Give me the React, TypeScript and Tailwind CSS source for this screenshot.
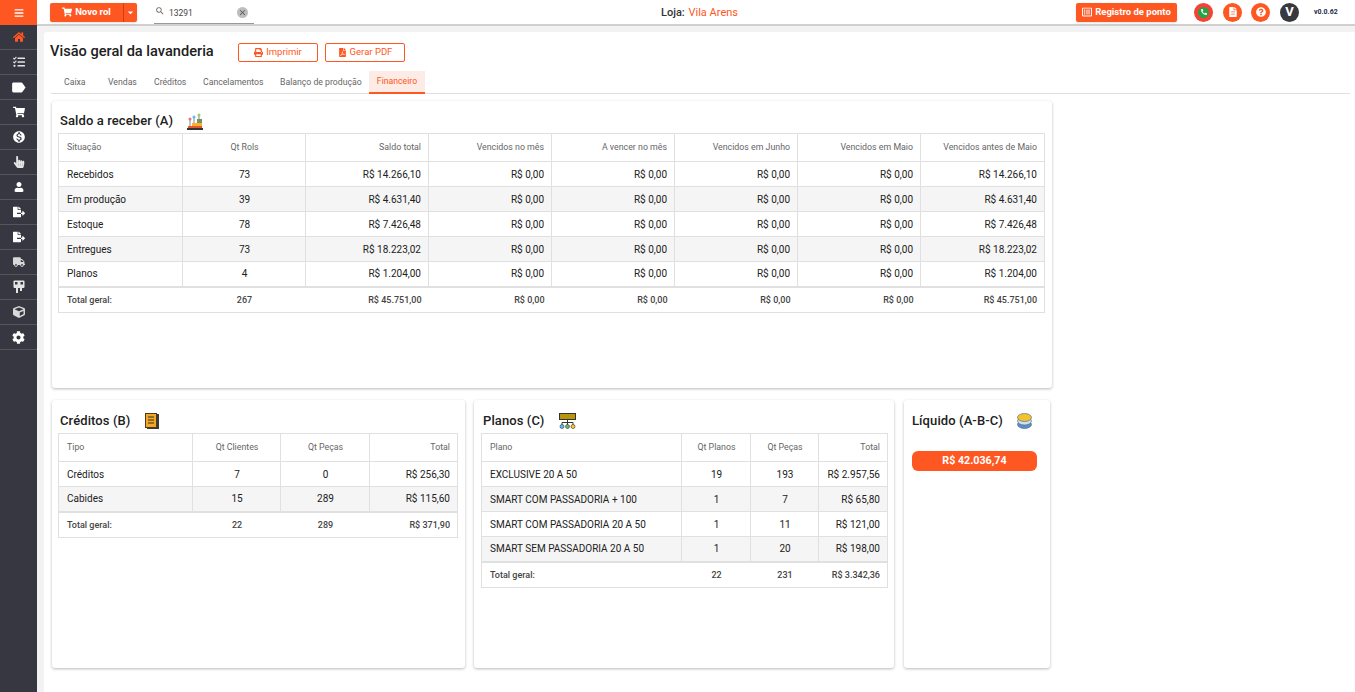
import type { ReactNode } from "react";
import { FaBars, FaHome, FaTasks, FaShoppingCart, FaHandPointer, FaUser, FaFileExport, FaTruck, FaCube, FaCog, FaPrint, FaFilePdf, FaFileAlt, FaQuestionCircle, FaPhoneAlt, FaRegListAlt } from "react-icons/fa";
import { MdLabel, MdMonetizationOn, MdArrowDropDown, MdSearch, MdClose } from "react-icons/md";

const font = { fontFamily: "Roboto, sans-serif" };

const HangerIcon = (
  <svg width="12" height="14" viewBox="0 0 12 14" fill="#e4e4e4">
    <rect x="0.5" y="0.5" width="11" height="7.500" rx="1" />
    <rect x="2" y="2" width="2.500" height="2.500" fill="#373741" />
    <rect x="7.500" y="2" width="2.500" height="2.500" fill="#373741" />
    <rect x="3" y="8" width="2" height="5" />
    <rect x="7" y="8" width="2" height="3" />
  </svg>
);

const navItems: ReactNode[] = [
  <FaHome size={12} color="#ff5722" />,
  <FaTasks size={12} color="#e4e4e4" />,
  <MdLabel size={17} color="#fff" />,
  <FaShoppingCart size={12} color="#fff" />,
  <MdMonetizationOn size={14} color="#fff" />,
  <FaHandPointer size={12} color="#e4e4e4" />,
  <FaUser size={10} color="#fff" />,
  <FaFileExport size={12} color="#fff" />,
  <FaFileExport size={12} color="#fff" />,
  <FaTruck size={12} color="#d8d8d8" />,
  HangerIcon,
  <FaCube size={12} color="#d8d8d8" />,
  <FaCog size={13} color="#fff" />,
];

function Sidebar() {
  return (
    <aside className="w-[37px] shrink-0 bg-[#373741] min-h-[692px]">
      <div className="h-[25px] bg-[#ff5722] flex items-center justify-center">
        <FaBars size={10} color="#fff" />
      </div>
      {navItems.map((icon, i) => (
        <div key={i} className="h-[25px] flex items-center justify-center border-b border-[#55555e]">
          {icon}
        </div>
      ))}
    </aside>
  );
}

function TopBar() {
  return (
    <header className="h-[26px] bg-white border-b-2 border-[#d0d0d0] flex items-center relative shrink-0">
      <div className="ml-[13px] flex h-[19px] rounded-[2px] overflow-hidden shadow-sm bg-[#ff5722] text-white text-[9.5px] font-bold">
        <div className="w-[74px] flex items-center justify-center gap-[3px] border-r border-[#c9431a]">
          <FaShoppingCart size={10} />
          Novo rol
        </div>
        <div className="w-[13px] flex items-center justify-center">
          <MdArrowDropDown size={13} />
        </div>
      </div>
      <div className="ml-[17px] w-[100px] h-[24px] border-b border-[#999] flex items-center pt-[3px] text-[8.5px] text-[#444] relative">
        <MdSearch size={10} color="#666" className="ml-[1px] -mt-[4px]" />
        <span className="ml-[4px]">13291</span>
        <span className="absolute left-[83px] top-[7px] w-[11px] h-[11px] rounded-full bg-[#bdbdbd] flex items-center justify-center">
          <MdClose size={9} color="#555" />
        </span>
      </div>
      <div className="absolute left-[624px] top-[5px] text-[11px] text-[#333] font-medium">
        Loja: <span className="ml-[1px] text-[#ff5722] font-normal">Vila Arens</span>
      </div>
      <div className="ml-auto flex items-center">
        <div className="w-[101px] h-[19px] bg-[#ff5722] rounded-[2px] text-white text-[9.5px] font-bold flex items-center justify-center gap-[3px] shadow-sm">
          <FaRegListAlt size={10} />
          Registro de ponto
        </div>
        <span className="ml-[17px] w-[19px] h-[19px] rounded-full bg-[#f44336] flex items-center justify-center">
          <span className="w-[11px] h-[11px] rounded-full bg-[#25a244] flex items-center justify-center">
            <FaPhoneAlt size={6} color="#fff" />
          </span>
        </span>
        <span className="ml-[10px] w-[19px] h-[19px] rounded-full bg-[#ff5722] flex items-center justify-center">
          <FaFileAlt size={10} color="#fff" />
        </span>
        <span className="ml-[9px] w-[19px] h-[19px] rounded-full bg-[#ff5722] flex items-center justify-center">
          <FaQuestionCircle size={10} color="#fff" />
        </span>
        <span className="ml-[10px] w-[19px] h-[19px] rounded-full bg-[#37393f] text-white text-[13px] font-bold flex items-center justify-center">V</span>
        <span className="ml-[15px] mr-[18px] text-[7px] font-bold text-[#1c2b4a] w-[23px] whitespace-nowrap">v0.0.62</span>
      </div>
    </header>
  );
}

type Col = { w: number; align: "left" | "center" | "right" };

function DataTable({ cols, head, rows, total }: { cols: Col[]; head: string[]; rows: string[][]; total: string[] }) {
  const alignClass = (a: Col["align"]) => (a === "left" ? "text-left" : a === "center" ? "text-center" : "text-right");
  return (
    <table className="table-fixed border-collapse border border-[#e0e0e0] text-[#212121] whitespace-nowrap" style={{ width: cols.reduce((s, c) => s + c.w, 0) }}>
      <colgroup>
        {cols.map((c, i) => (
          <col key={i} style={{ width: c.w }} />
        ))}
      </colgroup>
      <thead>
        <tr className="h-[28px]">
          {head.map((h, i) => (
            <th key={i} className={`${alignClass(cols[i].align)} border border-[#e0e0e0] pl-2 pr-[7px] text-[8.8px] font-normal text-[#666]`}>{h}</th>
          ))}
        </tr>
      </thead>
      <tbody>
        {rows.map((r, ri) => (
          <tr key={ri} className={ri % 2 ? "h-[25px] bg-[#f5f5f5]" : "h-[25px]"}>
            {r.map((v, i) => (
              <td key={i} className={`${alignClass(cols[i].align)} border border-[#e0e0e0] pl-2 pr-[7px] text-[10px]`}>{v}</td>
            ))}
          </tr>
        ))}
        <tr className="h-[26px] border-t-2 border-[#e0e0e0]">
          {total.map((v, i) => (
            <td key={i} className={`${alignClass(cols[i].align)} pl-2 pr-[7px] pt-[1px] text-[9px] font-medium text-[#444]`}>{v}</td>
          ))}
        </tr>
      </tbody>
    </table>
  );
}

function CardTitle({ icon, children }: { icon: ReactNode; children: ReactNode }) {
  return (
    <div className="h-[26px] pt-[2px] flex items-center gap-[14px] pl-[2px] text-[13px] font-medium text-[#212121] tracking-[0.1px]">
      {children}
      {icon}
    </div>
  );
}

function Card({ className, children }: { className: string; children: ReactNode }) {
  return <section className={`bg-white rounded-[3px] shadow-[0_1px_3px_rgba(0,0,0,0.28)] ${className}`}>{children}</section>;
}

const GrowthIcon = (
  <svg width="16" height="17" viewBox="0 0 16 17">
    <rect x="0" y="15" width="16" height="2" fill="#333" />
    <rect x="1" y="13" width="14" height="2" fill="#e8572a" />
    <rect x="5" y="10" width="10" height="3" fill="#f5b335" />
    <rect x="10" y="6" width="5" height="4" fill="#7a8f5c" />
    <path d="M3 13V7M7 10V4M12 6V2" stroke="#555" strokeWidth="0.7" />
    <circle cx="3" cy="6" r="1.500" fill="#e57373" />
    <circle cx="7" cy="4" r="1.500" fill="#64b5f6" />
    <circle cx="12" cy="2" r="1.500" fill="#9ccc65" />
  </svg>
);
const BookIcon = (
  <svg width="14" height="16" viewBox="0 0 14 16">
    <rect x="2" y="1" width="12" height="15" fill="#3a3a3a" />
    <rect x="0.5" y="0.5" width="11" height="14" fill="#f5a623" stroke="#4a3a20" />
    <path d="M3 4h6M3 7h6M3 10h6" stroke="#333" strokeWidth="1" />
  </svg>
);
const OrgIcon = (
  <svg width="17" height="16" viewBox="0 0 17 16">
    <rect x="0.500" y="0.500" width="16" height="6" fill="#b8960c" stroke="#333" />
    <path d="M8.500 7v5M3 12V9.500h11V12" stroke="#333" fill="none" />
    <circle cx="3" cy="13.500" r="2" fill="#4fc3f7" stroke="#333" strokeWidth="0.6" />
    <circle cx="8.500" cy="13.500" r="2" fill="#66bb6a" stroke="#333" strokeWidth="0.6" />
    <circle cx="14" cy="13.500" r="2" fill="#ffca28" stroke="#333" strokeWidth="0.6" />
  </svg>
);
const CoinsIcon = (
  <svg width="15" height="16" viewBox="0 0 15 16">
    <ellipse cx="7.500" cy="11.500" rx="7" ry="4" fill="#5b8fc7" stroke="#44617f" strokeWidth="0.6" />
    <ellipse cx="7.500" cy="8" rx="7" ry="4" fill="#cfe0f0" stroke="#44617f" strokeWidth="0.6" />
    <ellipse cx="7.500" cy="4.500" rx="7" ry="4" fill="#f2c230" stroke="#44617f" strokeWidth="0.6" />
  </svg>
);

const r = "right" as const;
const c = "center" as const;
const l = "left" as const;

export default function App() {
  return (
    <div className="flex w-[1355px] h-[692px] overflow-hidden bg-[#f2f2f2]" style={font}>
      <Sidebar />
      <div className="flex-1 flex flex-col min-w-0">
        <TopBar />
        <main className="flex-1 mt-[6px] ml-[7px] bg-white rounded-tl-[3px] pl-[6px] pr-[5px]">
          <div className="flex items-center h-[36px] pt-[2px] mt-[1px]">
            <h1 className="w-[188px] text-[14.6px] font-medium text-[#212121] whitespace-nowrap">Visão geral da lavanderia</h1>
            <button className="w-[80px] h-[19px] border border-[#ff5722] rounded-[2px] text-[#ff5722] text-[9.5px] flex items-center justify-center gap-[3px]">
              <FaPrint size={9} />
              Imprimir
            </button>
            <button className="ml-[7px] w-[80px] h-[19px] border border-[#ff5722] rounded-[2px] text-[#ff5722] text-[9.5px] flex items-center justify-center gap-[3px]">
              <FaFilePdf size={9} />
              Gerar PDF
            </button>
          </div>
          <nav className="flex h-[23px] border-b border-[#e0e0e0] text-[8.7px] text-[#666] ml-[1px] mt-[2px] whitespace-nowrap">
            <span className="w-[48px] pl-[13px] pt-[1px] flex items-center">Caixa</span>
            <span className="w-[48px] pl-[9px] pt-[1px] flex items-center">Vendas</span>
            <span className="w-[48px] pl-[7px] pt-[1px] flex items-center">Créditos</span>
            <span className="w-[77px] pl-[8px] pt-[1px] flex items-center">Cancelamentos</span>
            <span className="w-[97px] pl-[8px] pt-[1px] flex items-center">Balanço de produção</span>
            <span className="w-[56px] h-[23px] bg-[#fdebe5] border-b-2 border-[#ff5722] text-[#ff5722] flex items-center justify-center pt-[1px]">Financeiro</span>
          </nav>
          <Card className="w-[1000px] h-[287px] mt-[7px] ml-[2px] px-[6px] pt-[6px]">
            <CardTitle icon={GrowthIcon}>Saldo a receber (A)</CardTitle>
            <DataTable
              cols={[{ w: 124, align: l }, { w: 123, align: c }, { w: 123, align: r }, { w: 123, align: r }, { w: 123, align: r }, { w: 123, align: r }, { w: 123, align: r }, { w: 124, align: r }]}
              head={["Situação", "Qt Rols", "Saldo total", "Vencidos no mês", "A vencer no mês", "Vencidos em Junho", "Vencidos em Maio", "Vencidos antes de Maio"]}
              rows={[
                ["Recebidos", "73", "R$ 14.266,10", "R$ 0,00", "R$ 0,00", "R$ 0,00", "R$ 0,00", "R$ 14.266,10"],
                ["Em produção", "39", "R$ 4.631,40", "R$ 0,00", "R$ 0,00", "R$ 0,00", "R$ 0,00", "R$ 4.631,40"],
                ["Estoque", "78", "R$ 7.426,48", "R$ 0,00", "R$ 0,00", "R$ 0,00", "R$ 0,00", "R$ 7.426,48"],
                ["Entregues", "73", "R$ 18.223,02", "R$ 0,00", "R$ 0,00", "R$ 0,00", "R$ 0,00", "R$ 18.223,02"],
                ["Planos", "4", "R$ 1.204,00", "R$ 0,00", "R$ 0,00", "R$ 0,00", "R$ 0,00", "R$ 1.204,00"],
              ]}
              total={["Total geral:", "267", "R$ 45.751,00", "R$ 0,00", "R$ 0,00", "R$ 0,00", "R$ 0,00", "R$ 45.751,00"]}
            />
          </Card>
          <div className="flex mt-[12px] ml-[2px]">
            <Card className="w-[413px] h-[268px] px-[6px] pt-[7px]">
              <CardTitle icon={BookIcon}>Créditos (B)</CardTitle>
              <DataTable
                cols={[{ w: 134, align: l }, { w: 88, align: c }, { w: 89, align: c }, { w: 88, align: r }]}
                head={["Tipo", "Qt Clientes", "Qt Peças", "Total"]}
                rows={[
                  ["Créditos", "7", "0", "R$ 256,30"],
                  ["Cabides", "15", "289", "R$ 115,60"],
                ]}
                total={["Total geral:", "22", "289", "R$ 371,90"]}
              />
            </Card>
            <Card className="w-[420px] h-[268px] ml-[9px] px-[7px] pt-[7px]">
              <CardTitle icon={OrgIcon}>Planos (C)</CardTitle>
              <DataTable
                cols={[{ w: 200, align: l }, { w: 69, align: c }, { w: 68, align: c }, { w: 69, align: r }]}
                head={["Plano", "Qt Planos", "Qt Peças", "Total"]}
                rows={[
                  ["EXCLUSIVE 20 A 50", "19", "193", "R$ 2.957,56"],
                  ["SMART COM PASSADORIA + 100", "1", "7", "R$ 65,80"],
                  ["SMART COM PASSADORIA 20 A 50", "1", "11", "R$ 121,00"],
                  ["SMART SEM PASSADORIA 20 A 50", "1", "20", "R$ 198,00"],
                ]}
                total={["Total geral:", "22", "231", "R$ 3.342,36"]}
              />
            </Card>
            <Card className="w-[146px] h-[268px] ml-[10px] px-[6px] pt-[7px]">
              <CardTitle icon={CoinsIcon}>Líquido (A-B-C)</CardTitle>
              <div className="mt-[18px] mx-[2px] h-[20px] w-[125px] rounded-[6px] bg-[#ff5722] text-white text-[10.7px] font-bold flex items-center justify-center">R$ 42.036,74</div>
            </Card>
          </div>
        </main>
      </div>
    </div>
  );
}
